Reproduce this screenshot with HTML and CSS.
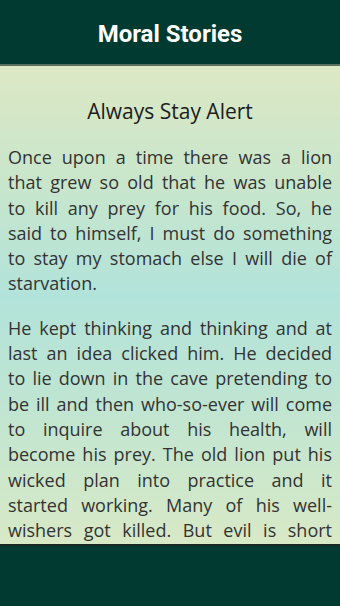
FILE: index.html
```html
<!DOCTYPE html>
<html>

<head>
    <link rel="stylesheet" href="styles.css">
</head>

<body>
    <div class="app">
        <!-- top bar -->
        <div class="topbar">Moral Stories</div>

        <!-- story -->
        <div class="story">
            <h1 class="story-title">Always Stay Alert</h1>
            <p class="story-text">Once upon a time there was a lion that grew so old that he was unable to kill any prey for his food. So, he said to himself, I must do something to stay my stomach else I will die of starvation.</p>
            <p class="story-text">He kept thinking and thinking and at last an idea clicked him. He decided to lie down in the cave pretending to be ill and then who-so-ever will come to inquire about his health, will become his prey. The old lion put his wicked plan into practice and it started working. Many of his well-wishers got killed. But evil is short lived and the lion was caught in the end.</p>
        </div>

        <!-- bottom bar -->
        <div class="bottombar"></div>
    </div>
</body>

</html>
```

FILE: styles.css
```css
html,
body {
    margin: 0;
    padding: 0;
}

.app {
    width: 340px;
    height: 606px;
    display: flex;
    flex-direction: column;
    overflow: hidden;
}

.topbar {
    height: 60px;
    flex-shrink: 0;
    padding-top: 4px;
    background: #013a31;
    color: #fff;
    font-family: Roboto, "Liberation Sans", sans-serif;
    font-weight: bold;
    font-size: 24px;
    display: flex;
    align-items: center;
    justify-content: center;
    border-bottom: 2px solid #55705f;
}

.story {
    flex: 1;
    overflow: hidden;
    padding: 0 8px;
    background: linear-gradient(180deg, #dce8c4 0%, #c8e6cc 25%, #b2e3da 48%, #bfe5d2 70%, #d8e9c6 100%);
    font-family: "Open Sans", "Noto Sans", sans-serif;
    color: #333;
}

.story-title {
    margin: 30px 0 0;
    text-align: center;
    font-weight: normal;
    font-size: 21px;
    line-height: 30px;
    color: #1c1c1c;
}

.story-text {
    margin: 19px 0 0;
    font-size: 18px;
    line-height: 25.3px;
    word-spacing: 2px;
    text-align: justify;
}

.bottombar {
    height: 60px;
    flex-shrink: 0;
    background: #013a31;
    border-top: 2px solid #1a2a22;
}
```
